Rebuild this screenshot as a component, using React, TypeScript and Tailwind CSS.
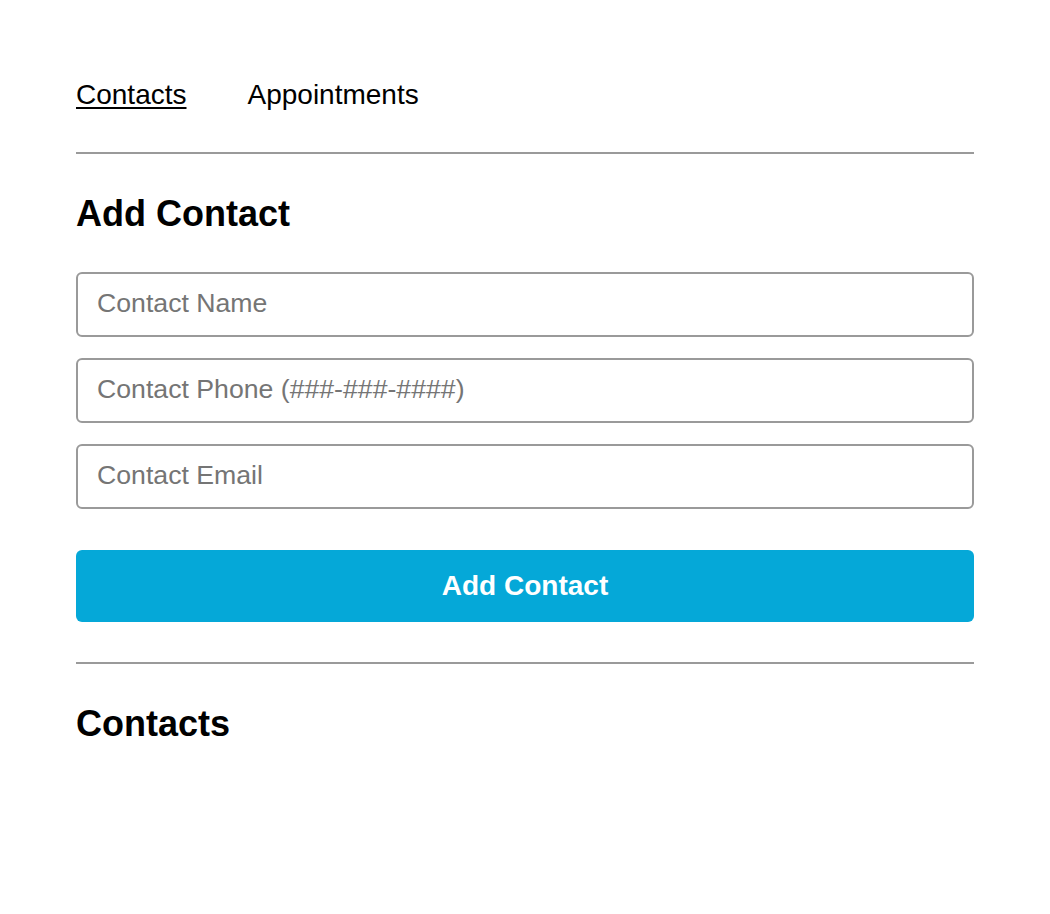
import React, { useState } from 'react';

export default function App() {
  const [form, setForm] = useState({ name: '', phone: '', email: '' });

  const handleChange = (key: 'name' | 'phone' | 'email', value: string) => {
    setForm((prev) => ({ ...prev, [key]: value }));
  };

  const inputClass =
    'w-full h-[65px] rounded-[6px] border-2 border-[#9a9a9a] px-[19px] pb-[2px] text-[26.67px] text-black placeholder:text-[#757575] bg-white focus:outline-none';

  return (
    <div className="min-h-screen bg-white px-[76px] pt-[79px] text-black font-['Liberation_Sans',Arial,sans-serif]">
      {/* Nav */}
      <nav className="flex gap-[61px] text-[28px] leading-[32px]">
        <a href="#" className="underline underline-offset-[3px] decoration-[2px]">Contacts</a>
        <a href="#">Appointments</a>
      </nav>
      <hr className="mt-[41px] border-0 h-[2px] bg-[#9a9a9a]" />

      <h2 className="mt-[39px] text-[36px] leading-[41px] font-bold">Add Contact</h2>
      <form
        onSubmit={(e) => e.preventDefault()}
        className="mt-[38px] flex flex-col gap-[21px]"
      >
        <input
          type="text"
          placeholder="Contact Name"
          value={form.name}
          onChange={(e) => handleChange('name', e.target.value)}
          className={inputClass}
        />
        <input
          type="tel"
          placeholder="Contact Phone (###-###-####)"
          value={form.phone}
          onChange={(e) => handleChange('phone', e.target.value)}
          className={inputClass}
        />
        <input
          type="email"
          placeholder="Contact Email"
          value={form.email}
          onChange={(e) => handleChange('email', e.target.value)}
          className={inputClass}
        />
        <button
          type="submit"
          className="mt-[20px] h-[72px] w-full rounded-[6px] bg-[#05a8d8] text-white text-[28px] font-bold"
        >
          Add Contact
        </button>
      </form>
      <hr className="mt-[40px] border-0 h-[2px] bg-[#9a9a9a]" />

      <h2 className="mt-[39px] text-[36px] leading-[41px] font-bold">Contacts</h2>
    </div>
  );
}
